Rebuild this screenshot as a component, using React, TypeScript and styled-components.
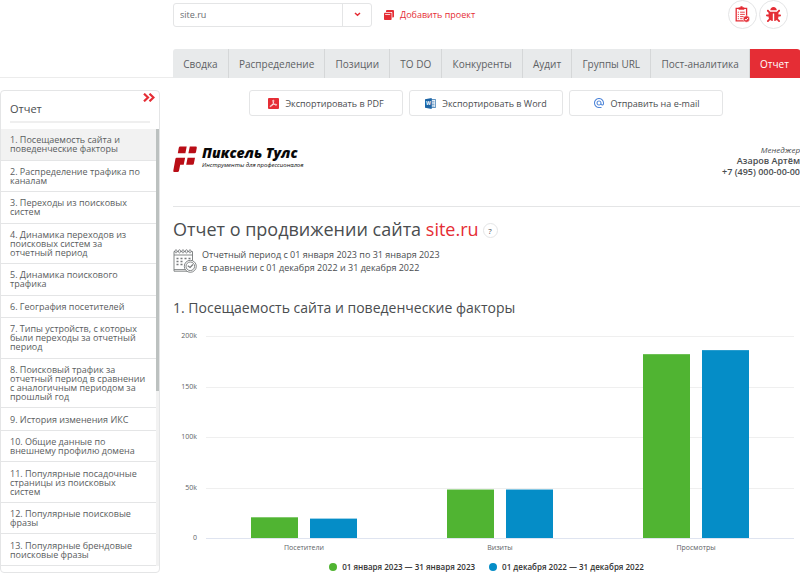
import React from "react";
import styled, { createGlobalStyle, css } from "styled-components";
import { FaBug } from "react-icons/fa";
import { MdAlternateEmail } from "react-icons/md";

const RED = "#e52d35";
const LINE = "#e4e5e6";
const FONT = '"Open Sans", "Noto Sans", sans-serif';

const GlobalStyle = createGlobalStyle`
  *, *::before, *::after { box-sizing: border-box; }
  body { margin: 0; background: #fff; color: #4a4d4f; font-family: ${FONT}; font-size: 9px; }
  button, select { font: inherit; color: inherit; }
  h1, h2, p { margin: 0; font-weight: 400; }
`;

const Page = styled.div`
  display: flex;
  flex-direction: column;
  min-height: 100vh;
`;

const Header = styled.header`
  padding-left: 173px;
  border-bottom: 1px solid #ececec;
`;

const Toolbar = styled.div`
  display: flex;
  align-items: center;
  height: 29px;
  padding-right: 12px;
  margin-bottom: 20px;
`;

const ProjectPicker = styled.label`
  position: relative;
  width: 199px;
  height: 24px;
`;

const ProjectSelect = styled.select`
  appearance: none;
  width: 100%;
  height: 100%;
  padding: 0 36px 0 6px;
  border: 1px solid ${LINE};
  border-radius: 3px;
  background: #fff;
  color: #6a6d70;
`;

const PickerArrow = styled.span`
  position: absolute;
  inset: 1px 1px 1px auto;
  width: 29px;
  display: flex;
  align-items: center;
  justify-content: center;
  border-left: 1px solid ${LINE};
  pointer-events: none;
`;

const AddProject = styled.a`
  display: flex;
  align-items: center;
  gap: 6px;
  margin-left: 12px;
  color: ${RED};
  text-decoration: none;
`;

const RoundButtons = styled.div`
  display: flex;
  gap: 2px;
  margin-left: auto;
`;

const RoundButton = styled.button`
  display: flex;
  align-items: center;
  justify-content: center;
  width: 29px;
  height: 29px;
  padding: 0;
  border: 1px solid ${LINE};
  border-radius: 50%;
  background: #fff;
  color: ${RED};
`;

const Tabs = styled.nav`
  display: flex;
  height: 29px;
  margin-bottom: -1px;
  border-radius: 3px 3px 0 0;
  overflow: hidden;
`;

const Tab = styled.a<{ $active?: boolean }>`
  display: flex;
  flex: 1 0 auto;
  align-items: center;
  justify-content: center;
  padding: 0 9px;
  background: #e8eaeb;
  border-right: 1px solid #d5d7d8;
  color: #5d6164;
  font-size: 10px;
  text-decoration: none;
  white-space: nowrap;
  ${(p) =>
    p.$active &&
    css`
      background: ${RED};
      border-right-color: ${RED};
      color: #fff;
    `}
`;

const Body = styled.div`
  display: grid;
  grid-template-columns: 160px minmax(0, 1fr);
  column-gap: 13px;
  flex: 1;
  padding: 12px 0 0;
`;

const Sidebar = styled.aside`
  display: flex;
  flex-direction: column;
  padding-bottom: 6px;
  border: 1px solid ${LINE};
  border-radius: 4px;
`;

const SidebarHead = styled.div`
  display: flex;
  justify-content: space-between;
  align-items: flex-start;
  height: 32px;
  margin: 0 9px 6px;
  border-bottom: 2px solid #efefef;
`;

const SidebarTitle = styled.span`
  padding-top: 10px;
  font-size: 11px;
  line-height: 15px;
`;

const CollapseButton = styled.button`
  display: flex;
  margin: 2px -5px 0 0;
  padding: 0;
  border: 0;
  background: none;
`;

const SidebarScroll = styled.div`
  display: grid;
  grid-template-columns: 1fr 3px;
  flex: 1;
`;

const SectionList = styled.div`
  display: flex;
  flex-direction: column;
`;

const SectionLink = styled.a<{ $active?: boolean }>`
  display: flex;
  flex: 1 0 auto;
  align-items: center;
  padding: 6px 9px;
  border-bottom: 1px solid ${LINE};
  background: ${(p) => (p.$active ? "#f2f2f2" : "#fff")};
  color: #5a5d60;
  line-height: 9px;
  text-decoration: none;
`;

const ScrollTrack = styled.div`
  background: #f2f2f2;
`;

const ScrollThumb = styled.div`
  height: 60%;
  background: #bcc1c0;
`;

const Main = styled.main`
  display: flex;
  flex-direction: column;
`;

const ExportBar = styled.div`
  display: flex;
  justify-content: center;
  gap: 6px;
  padding-right: 1px;
`;

const ExportButton = styled.button`
  display: flex;
  align-items: center;
  justify-content: center;
  gap: 6px;
  width: 154px;
  height: 26px;
  padding: 0;
  border: 1px solid ${LINE};
  border-radius: 3px;
  background: #fff;
`;

const Brand = styled.div`
  display: flex;
  justify-content: space-between;
  height: 62px;
  margin-top: 29px;
  margin-bottom: 10px;
  border-bottom: 1px solid ${LINE};
`;

const Logo = styled.a`
  display: flex;
  align-items: flex-start;
  gap: 5px;
  color: #080808;
  font-style: italic;
  text-decoration: none;
`;

const LogoText = styled.span`
  display: flex;
  flex-direction: column;
  white-space: nowrap;
`;

const LogoName = styled.span`
  font-size: 14px;
  font-weight: 800;
  line-height: 16px;
`;

const LogoTagline = styled.span`
  font-size: 6px;
  line-height: 8px;
`;

const Manager = styled.address`
  display: flex;
  flex-direction: column;
  text-align: right;
  font-style: normal;
  font-weight: 600;
  line-height: 11px;
`;

const ManagerRole = styled.em`
  font-size: 8px;
  font-weight: 400;
  line-height: 10px;
`;

const TitleRow = styled.div`
  display: flex;
  align-items: center;
  gap: 4px;
`;

const Title = styled.h1`
  font-size: 18px;
  line-height: 24px;
`;

const SiteName = styled.span`
  color: ${RED};
`;

const HelpButton = styled.button`
  display: flex;
  align-items: center;
  justify-content: center;
  width: 15px;
  height: 15px;
  margin-top: 3px;
  padding: 0;
  border: 1px solid ${LINE};
  border-radius: 50%;
  background: #fff;
  font-size: 8px;
`;

const Period = styled.div`
  display: flex;
  align-items: center;
  gap: 5px;
  margin: 7px 0 24px;
`;

const PeriodText = styled.p`
  line-height: 13px;
`;

const SectionTitle = styled.h2`
  font-size: 14px;
  line-height: 20px;
`;

const ChartSvg = styled.svg`
  display: block;
  width: 100%;
  margin-top: 7px;
  font-family: ${FONT};
  font-size: 7px;
  fill: #606366;
`;

const Legend = styled.div`
  display: flex;
  justify-content: center;
  gap: 14px;
  margin-top: 5px;
`;

const LegendItem = styled.span<{ $color: string }>`
  display: flex;
  align-items: center;
  gap: 5px;
  font-size: 8px;
  font-weight: 600;
  line-height: 10px;
  color: #333;
  &::before {
    content: "";
    width: 8px;
    height: 8px;
    border-radius: 50%;
    background: ${(p) => p.$color};
  }
`;

const GREEN = "#50b432";
const BLUE = "#058dc7";

const tabs = ["Сводка", "Распределение", "Позиции", "TO DO", "Конкуренты", "Аудит", "Группы URL", "Пост-аналитика", "Отчет"];

const sections = [
  "Посещаемость сайта и поведенческие факторы",
  "Распределение трафика по каналам",
  "Переходы из поисковых систем",
  "Динамика переходов из поисковых систем за отчетный период",
  "Динамика поискового трафика",
  "География посетителей",
  "Типы устройств, с которых были переходы за отчетный период",
  "Поисковый трафик за отчетный период в сравнении с аналогичным периодом за прошлый год",
  "История изменения ИКС",
  "Общие данные по внешнему профилю домена",
  "Популярные посадочные страницы из поисковых систем",
  "Популярные поисковые фразы",
  "Популярные брендовые поисковые фразы",
];

const chart = [
  { label: "Посетители", current: 20.5, previous: 19.2 },
  { label: "Визиты", current: 48, previous: 48 },
  { label: "Просмотры", current: 182, previous: 186 },
];

const ChevronDown = () => (
  <svg width="7" height="5" viewBox="0 0 7 5" fill="none" stroke={RED} strokeWidth="1.5">
    <path d="M1 1l2.5 2.3L6 1" />
  </svg>
);

const StackIcon = () => (
  <svg width="10" height="10" viewBox="0 0 10 10">
    <path d="M2 2V1q0-1 1-1h6q1 0 1 1v5.5q0 1-1 1h-.7V2.8q0-.8-.8-.8z" fill={RED} />
    <path d="M.8 2.8h6q.8 0 .8.8v5.6q0 .8-.8.8h-6Q0 10 0 9.2V3.6q0-.8.8-.8z" fill={RED} />
    <path d="M1.2 4.500h5" stroke="#fff" strokeWidth=".8" />
  </svg>
);

const ChecklistIcon = () => (
  <svg width="15" height="17" viewBox="0 0 15 17" fill="none" stroke={RED}>
    <path d="M9 14.8H1.2V2.3h10.4V10" strokeWidth="1.3" />
    <path d="M3.8 3.4V1.7h1.4L5.8.4h1.4l.6 1.3h1.3v1.7z" fill={RED} strokeWidth=".5" />
    <path d="M5.1 6.2h4.7M5.1 8.4h4.7M5.1 10.6h3.5M5.1 12.7h2.5" strokeWidth=".9" />
    <path d="M2.8 6.2h1M2.8 8.4h1M2.8 10.6h1M2.8 12.7h1" strokeWidth="1" />
    <circle cx="11.4" cy="13" r="3.2" fill={RED} stroke="#fff" strokeWidth=".5" />
    <path d="M9.9 13l1.1 1.2 2-2.2" stroke="#fff" />
  </svg>
);

const DoubleChevron = () => (
  <svg width="12" height="9" viewBox="0 0 12 9" fill="none" stroke={RED} strokeWidth="2.2">
    <path d="M1 .7l4 3.8-4 3.8M6.5 .7l4 3.8-4 3.8" />
  </svg>
);

const PdfIcon = () => (
  <svg width="11" height="11" viewBox="0 0 11 11">
    <rect width="11" height="11" rx="1" fill={RED} />
    <path
      d="M5.2 2c.9 0 .6 2-.2 3.7C4.2 7.5 3 9 2.3 8.6c-.7-.6 1-1.7 3-2.1 1.7-.4 3.5-.3 3.4.4-.2.8-2.1 0-3-1.4C4.9 4.3 4.5 2 5.2 2z"
      fill="none"
      stroke="#fff"
      strokeWidth=".8"
    />
  </svg>
);

const WordIcon = () => (
  <svg width="11" height="11" viewBox="0 0 11 11">
    <path d="M6 1.5h4.6v8H6z" fill="#fff" stroke="#1d65a6" strokeWidth=".7" />
    <path d="M6.5 3.3h3M6.5 5h3M6.5 6.6h3M6.5 8.1h3" stroke="#1d65a6" strokeWidth=".6" />
    <path d="M0 1.2L6.7 0v11L0 9.8z" fill="#1d65a6" />
    <text x="3.3" y="7.3" textAnchor="middle" fontSize="5" fontWeight="700" fill="#fff">W</text>
  </svg>
);

const LogoMark = () => (
  <svg width="24" height="28" viewBox="0 0 24 28" fill="#b90d16">
    <path d="M7.2 1.500h6.500l-1.300 6.800H4.800l1-5.600q.2-1.200 1.400-1.200z" />
    <path d="M16.800 1.500h6q1.200 0 1 1.200l-.8 4.400q-.2 1.200-1.400 1.200h-6.200z" />
    <path d="M3.700 12.700h8.400l-1.400 7H7.200L6 25.800q-.3 1.200-1.500 1.200H1.300Q0 27 .3 25.800L2.400 13.900q.2-1.200 1.300-1.200z" />
    <path d="M14.600 12.700H22l-1.100 5.800q-.2 1.200-1.400 1.200h-6.300z" />
  </svg>
);

const CalendarIcon = () => (
  <svg width="24" height="24" viewBox="0 0 24 24" fill="none" stroke="#777a7c" strokeWidth=".9">
    <path d="M14 22.2H1V2.5h18.5v11" />
    <path d="M1 6h18.500M1 20.6h12" />
    <g fill="#fff" strokeWidth=".8">
      <ellipse cx="3" cy="2.3" rx="1" ry="1.7" />
      <ellipse cx="6.5" cy="2.3" rx="1" ry="1.7" />
      <ellipse cx="10" cy="2.3" rx="1" ry="1.7" />
      <ellipse cx="13.5" cy="2.3" rx="1" ry="1.7" />
      <ellipse cx="17" cy="2.3" rx="1" ry="1.7" />
    </g>
    <path d="M3.5 9.5h2M7.5 9.5h2M11.5 9.5h2M15.5 9.5h2M3.5 12.5h2M7.5 12.5h2M3.5 15.5h2M7.5 15.5h2" strokeWidth="1.5" />
    <circle cx="17.3" cy="17.3" r="6" fill="#fff" />
    <circle cx="17.3" cy="17.3" r="4.3" />
    <path d="M14.8 16.8l2.3 1.7 2.8-3" strokeWidth="1.2" />
  </svg>
);

const BASE = 213;
const STEP = 50.5;
const heightOf = (value: number) => (value / 50) * STEP;

const VisitsChart = () => (
  <ChartSvg viewBox="0 0 627 232" role="img" aria-label="Посещаемость сайта">
    {[0, 50, 100, 150, 200].map((value) => (
      <g key={value}>
        <path
          d={`M33 ${Math.round(BASE - heightOf(value)) + 0.5}H621`}
          stroke={value ? "#efefef" : "#dfe4f0"}
        />
        <text x="24" y={BASE - heightOf(value) + 2} textAnchor="end">
          {value ? `${value}k` : "0"}
        </text>
      </g>
    ))}
    {chart.map((group, i) => {
      const center = 131 + i * 196;
      return (
        <g key={group.label}>
          <rect x={center - 53} y={BASE - heightOf(group.current)} width="47" height={heightOf(group.current)} fill={GREEN} />
          <rect x={center + 6} y={BASE - heightOf(group.previous)} width="47" height={heightOf(group.previous)} fill={BLUE} />
          <text x={center} y="225" textAnchor="middle">{group.label}</text>
        </g>
      );
    })}
  </ChartSvg>
);

export default function App() {
  return (
    <Page>
      <GlobalStyle />
      <Header>
        <Toolbar>
          <ProjectPicker>
            <ProjectSelect aria-label="Проект" defaultValue="site.ru">
              <option>site.ru</option>
            </ProjectSelect>
            <PickerArrow>
              <ChevronDown />
            </PickerArrow>
          </ProjectPicker>
          <AddProject href="#add">
            <StackIcon />
            Добавить проект
          </AddProject>
          <RoundButtons>
            <RoundButton aria-label="Задачи">
              <ChecklistIcon />
            </RoundButton>
            <RoundButton aria-label="Сообщить об ошибке">
              <FaBug size={15} />
            </RoundButton>
          </RoundButtons>
        </Toolbar>
        <Tabs>
          {tabs.map((name) => (
            <Tab key={name} href="#tab" $active={name === "Отчет"}>
              {name}
            </Tab>
          ))}
        </Tabs>
      </Header>
      <Body>
        <Sidebar>
          <SidebarHead>
            <SidebarTitle>Отчет</SidebarTitle>
            <CollapseButton aria-label="Развернуть">
              <DoubleChevron />
            </CollapseButton>
          </SidebarHead>
          <SidebarScroll>
            <SectionList>
              {sections.map((name, i) => (
                <SectionLink key={name} href={`#section-${i + 1}`} $active={i === 0}>
                  {`${i + 1}. ${name}`}
                </SectionLink>
              ))}
            </SectionList>
            <ScrollTrack>
              <ScrollThumb />
            </ScrollTrack>
          </SidebarScroll>
        </Sidebar>
        <Main>
          <ExportBar>
            <ExportButton>
              <PdfIcon />
              Экспортировать в PDF
            </ExportButton>
            <ExportButton>
              <WordIcon />
              Экспортировать в Word
            </ExportButton>
            <ExportButton>
              <MdAlternateEmail size={12} color="#4f86d9" />
              Отправить на e-mail
            </ExportButton>
          </ExportBar>
          <Brand>
            <Logo href="#home">
              <LogoMark />
              <LogoText>
                <LogoName>Пиксель Тулс</LogoName>
                <LogoTagline>Инструменты для профессионалов</LogoTagline>
              </LogoText>
            </Logo>
            <Manager>
              <ManagerRole>Менеджер</ManagerRole>
              <span>Азаров Артём</span>
              <span>+7 (495) 000-00-00</span>
            </Manager>
          </Brand>
          <TitleRow>
            <Title>
              Отчет о продвижении сайта <SiteName>site.ru</SiteName>
            </Title>
            <HelpButton aria-label="Справка">?</HelpButton>
          </TitleRow>
          <Period>
            <CalendarIcon />
            <PeriodText>
              Отчетный период с 01 января 2023 по 31 января 2023
              <br />в сравнении с 01 декабря 2022 и 31 декабря 2022
            </PeriodText>
          </Period>
          <SectionTitle>1. Посещаемость сайта и поведенческие факторы</SectionTitle>
          <VisitsChart />
          <Legend>
            <LegendItem $color={GREEN}>01 января 2023 — 31 января 2023</LegendItem>
            <LegendItem $color={BLUE}>01 декабря 2022 — 31 декабря 2022</LegendItem>
          </Legend>
        </Main>
      </Body>
    </Page>
  );
}
